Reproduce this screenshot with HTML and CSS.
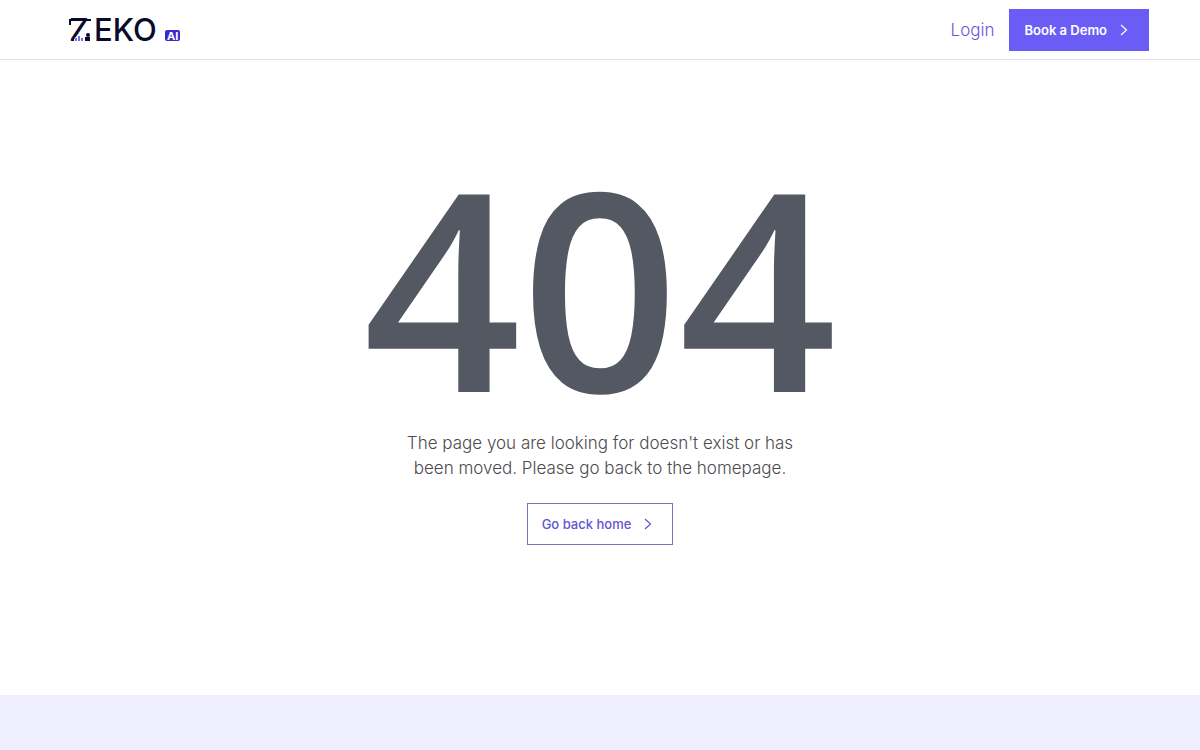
FILE: index.html
```html
<!DOCTYPE html>
<html lang="en">
<head>
  <meta charset="UTF-8">
  <meta name="viewport" content="width=device-width, initial-scale=1.0">
  <title>404 - Zeko AI</title>
  <link rel="stylesheet" href="styles.css">
</head>
<body>
  <header class="navbar">
    <a class="logo" href="#" aria-label="Zeko AI">
      <svg width="112" height="40" viewBox="0 0 112 40">
        <text class="logo-text" x="0" y="31">Z</text>
        <text class="logo-text" x="25" y="31">EKO</text>
        <!-- bars cut into the foot of the Z -->
        <path fill="#fff" d="M10 24H22V32H5V29z"/>
        <path fill="#7a6bf0" d="M6 28h2v3h-2zM9 26h2v5h-2zM12 28h2v3h-2z"/>
        <path fill="#0a0a2a" d="M16 27h5v4h-5z"/>
        <circle cx="19" cy="25" r="2" fill="#0a0a2a"/>
        <path fill="#0a0a2a" d="M0 9H22V11H2V15H0z"/>
        <rect x="96" y="20" width="15" height="11" rx="2" fill="#3b2bc4"/>
        <text class="logo-badge" x="98" y="30">AI</text>
      </svg>
    </a>
    <nav class="nav-links">
      <a class="login" href="#">Login</a>
      <a class="btn btn-fill" href="#">
        Book a Demo
        <svg class="arrow" width="8" height="12" viewBox="0 0 8 12"><path d="M1 1l5.5 5L1 11"/></svg>
      </a>
    </nav>
  </header>

  <main class="not-found">
    <h1>404</h1>
    <p>The page you are looking for doesn't exist or has been moved. Please go back to the homepage.</p>
    <a class="btn btn-outline" href="#">
      Go back home
      <svg class="arrow" width="8" height="12" viewBox="0 0 8 12"><path d="M1 1l5.5 5L1 11"/></svg>
    </a>
  </main>

  <footer class="footer"></footer>
</body>
</html>
```

FILE: styles.css
```css
* {
  box-sizing: border-box;
}
body {
  margin: 0;
  min-height: 100vh;
  display: flex;
  flex-direction: column;
  font-family: Inter, sans-serif;
  background-color: #fff;
}
a {
  text-decoration: none;
}
.navbar {
  display: flex;
  justify-content: space-between;
  align-items: center;
  height: 60px;
  padding: 0 51px 0 69px;
  border-bottom: 1px solid #e4e4e8;
}
.logo svg {
  display: block;
}
.logo-text {
  font-size: 31px;
  font-weight: 500;
  fill: #0a0a2a;
}
.logo-badge {
  font-size: 11px;
  font-weight: 700;
  fill: #fff;
}
.nav-links {
  display: flex;
  align-items: center;
  gap: 15px;
}
.login {
  font-size: 17px;
  font-weight: 350;
  color: #6657d8;
}
.btn {
  display: inline-flex;
  align-items: center;
  gap: 13px;
  height: 42px;
  padding: 0 20px 0 14px;
  border: 1px solid #6a5cf5;
  font-size: 13px;
}
.btn-fill {
  background-color: #6a5cf5;
  color: #fff;
  font-weight: 600;
}
.btn-outline {
  border-color: #7a70c0;
  color: #6455d0;
  font-weight: 500;
}
.arrow {
  fill: none;
  stroke: currentColor;
  stroke-width: 1.2;
}
.not-found {
  flex: 1;
  display: flex;
  flex-direction: column;
  align-items: center;
  padding: 94px 20px 150px;
  text-align: center;
}
.not-found h1 {
  margin: 0 0 14px;
  font-family: "Open Sans", sans-serif;
  font-size: 276px;
  font-weight: 600;
  line-height: 263px;
  color: #545863;
}
.not-found p {
  max-width: 400px;
  margin: 0 0 22px;
  font-size: 17px;
  font-weight: 350;
  line-height: 25px;
  color: #4c4c50;
}
.footer {
  height: 55px;
  background-color: #eeeeff;
}
```
